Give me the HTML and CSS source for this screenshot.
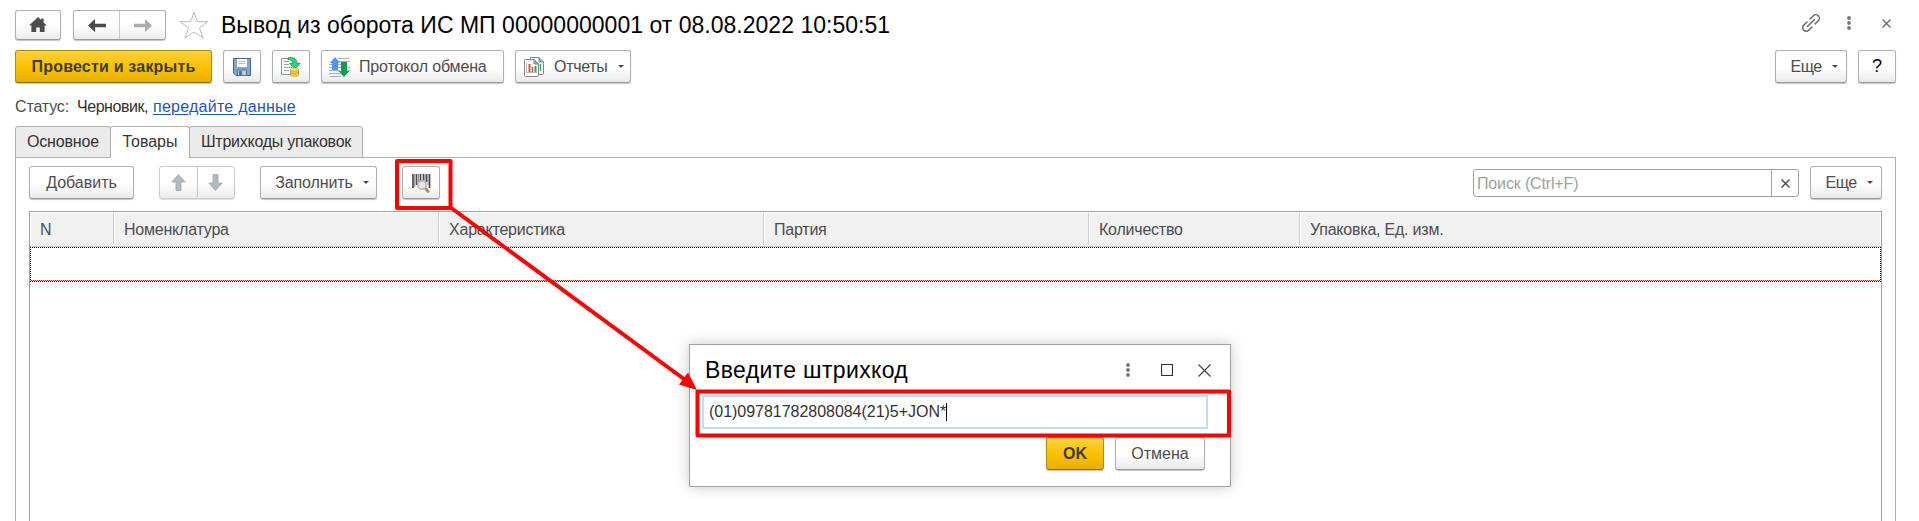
FILE: index.html
```html
<!DOCTYPE html>
<html lang="ru">
<head>
<meta charset="utf-8">
<title>Вывод из оборота ИС МП</title>
<link rel="stylesheet" href="styles.css">
</head>
<body>
<div class="form">
  <header class="titlebar">
    <button class="btn home"><svg width="18" height="16" viewBox="0 0 18 16"><path d="M9 0 0 8.6h2.4V15h4.8v-4.6h3.6V15h4.8V8.6H18L14.6 5.4V1.6h-2.4v1.5z" fill="#4d4d4d"/></svg></button>
    <div class="pair nav">
      <button><svg width="18" height="13" viewBox="0 0 18 13"><path d="M7 0 0 6.5 7 13V8.2h11V4.8H7z" fill="#4a4a4a"/></svg></button>
      <button><svg width="18" height="13" viewBox="0 0 18 13"><path d="m11 0 7 6.5-7 6.5V8.2H0V4.8h11z" fill="#acacac"/></svg></button>
    </div>
    <svg class="star" width="30" height="28" viewBox="0 0 30 28"><path d="m15 1.2 3.3 9.4 10.5.1-8.3 6.3 3.6 10.2L15 21l-9.100 6.200L9.500 17 1.200 10.700l10.500-.1z" fill="#fff" stroke="#b4bac0" stroke-width="1"/></svg>
    <h1 class="title">Вывод из оборота ИС МП 00000000001 от 08.08.2022 10:50:51</h1>
    <div class="wintools">
      <svg width="20" height="20" viewBox="0 0 20 20" fill="none" stroke="#6b6b6b" stroke-width="1.500" stroke-linecap="round"><path d="m6.500 13.500 7-7"/><path d="m9 6 3.300-3.300a3.500 3.500 0 0 1 5 5L14 11"/><path d="m11 14-3.300 3.300a3.500 3.500 0 0 1-5-5L6 9"/></svg>
      <svg width="4" height="14" viewBox="0 0 4 14" fill="#757575"><circle cx="2" cy="2" r="1.900"/><circle cx="2" cy="7" r="1.900"/><circle cx="2" cy="12" r="1.900"/></svg>
      <svg width="9" height="9" viewBox="0 0 9 9" stroke="#666" stroke-width="1.300"><path d="m.5.5 8 8m0-8-8 8"/></svg>
    </div>
  </header>

  <div class="commands">
    <button class="btn primary post">Провести и закрыть</button>
    <button class="btn icon"><svg width="18" height="18" viewBox="0 0 18 18"><path d="M.5.5h17v17H3L.5 15z" fill="#7fa6d4" stroke="#4b6685"/><path d="M4 1h10v8H4z" fill="#fff"/><path d="M5.500 3.500h7m-7 2h7" stroke="#b7bcc2"/><path d="M4.500 12h9v5.500h-9z" fill="#c9cdd1" stroke="#5f7186"/><path d="M6 13h3v4H6z" fill="#5c6f86"/></svg></button>
    <button class="btn icon"><svg width="20" height="20" viewBox="0 0 20 20"><path d="M.5 1.500h13v16H.5z" fill="#fafbfc" stroke="#8b9aa8"/><path d="M3 4.500h5m-5 3h5m-5 3h8m-8 3h5" stroke="#94a1ae"/><path d="M7 .8c6-1 9 1 9 5.700h3.200L14 12 8.800 6.500H12C12 3.500 10 2.500 7 2.800z" fill="#25d884" stroke="#159b5c" stroke-width=".8"/><path d="M9.500 12.500v5.300c0 2 8 2 8 0v-5.300z" fill="#f7cf46" stroke="#c99720" stroke-width=".8"/><path d="M9.500 15c0 2 8 2 8 0" fill="none" stroke="#c99720" stroke-width=".8"/><ellipse cx="13.500" cy="12.500" rx="4" ry="1.500" fill="#ffeb8f" stroke="#c99720" stroke-width=".8"/></svg></button>
    <button class="btn protocol"><svg width="21" height="20" viewBox="0 0 21 20"><path d="M9 1.500h11m-10 3h11M0 7.500h3m6 0h3M0 10.500h3m6 0h3m7 0h2M0 13.500h11m8 0h2M0 16.500h11M1 19.500h11" stroke="#a9b1b8"/><path d="M6 0 .8 6H3v7h6V6h2.200z" fill="#4f95f5"/><path d="M15 20 9.500 14H12V5h6v9h2.500z" fill="#0c9c50"/></svg><span>Протокол обмена</span></button>
    <button class="btn reports"><svg width="21" height="20" viewBox="0 0 21 20"><path d="M6.500.5h8.500l4.500 4.500v11.500a1 1 0 0 1-1 1h-11a1 1 0 0 1-1-1z" fill="#fff" stroke="#78899b"/><path d="M15 .5V5h4.500" fill="#9aa8b6" stroke="#78899b"/><path d="M16.500 7v7" stroke="#3faa45" stroke-width="1.500"/><path d="M1.500 2.500H10l4.500 4.500v11.500a1 1 0 0 1-1 1h-12a1 1 0 0 1-1-1v-15a1 1 0 0 1 1-1z" fill="#fff" stroke="#78899b"/><path d="M10 2.500V7h4.500z" fill="#9aa8b6" stroke="#78899b"/><path d="M2.500 6v9.500H13" fill="none" stroke="#c6b4b4"/><path d="M5.500 7v8" stroke="#e14a3c" stroke-width="2"/><path d="M8.500 10v5" stroke="#8a5f4e" stroke-width="1.500"/><path d="M11.500 9v6" stroke="#35a53e" stroke-width="2"/></svg><span>Отчеты</span><i class="caret"></i></button>
    <button class="btn more">Еще<i class="caret"></i></button>
    <button class="btn help">?</button>
  </div>

  <div class="status"><span class="label">Статус:</span><span class="state">Черновик,</span><a href="#">передайте данные</a></div>

  <nav class="tabs">
    <span class="tab t1">Основное</span><span class="tab active t2">Товары</span><span class="tab t3">Штрихкоды упаковок</span>
  </nav>

  <section class="panel">
    <div class="toolbar">
      <button class="btn add">Добавить</button>
      <div class="pair move">
        <button><svg width="15" height="17" viewBox="0 0 15 17"><path d="M7.500.5.8 8H5v8.500h5V8h4.200z" fill="#afbbc2" stroke="#99a7af" stroke-width=".8"/></svg></button>
        <button><svg width="15" height="17" viewBox="0 0 15 17"><path d="M7.500 16.500.8 9H5V.5h5V9h4.200z" fill="#afbbc2" stroke="#99a7af" stroke-width=".8"/></svg></button>
      </div>
      <button class="btn fill">Заполнить<i class="caret"></i></button>
      <button class="btn icon scan"><svg width="19" height="20" viewBox="0 0 19 20"><path d="M1 1v14M4.500 1v11M8.500 1v7M11.500 1v6M14.500 1v8M17.500 1v14" stroke="#4a4a4a" stroke-width="1.700"/><path d="M2.700 1v13M6.500 1v9M13 1v7M16 1v11" stroke="#8f8f8f"/><path d="m13 15 3.200 3.500" stroke="#b88a62" stroke-width="2.600" stroke-linecap="round"/><circle cx="10" cy="12" r="4.200" fill="#d9e8fa" stroke="#c3a797" stroke-width="1.400"/></svg></button>
      <div class="search"><span>Поиск (Ctrl+F)</span><b><svg width="9" height="9" viewBox="0 0 9 9" stroke="#444" stroke-width="1.300"><path d="m.5.5 8 8m0-8-8 8"/></svg></b></div>
      <button class="btn more">Еще<i class="caret"></i></button>
    </div>
    <div class="table">
      <div class="head">
        <span>N</span><span>Номенклатура</span><span>Характеристика</span><span>Партия</span><span>Количество</span><span>Упаковка, Ед. изм.</span>
      </div>
      <div class="row"></div>
    </div>
  </section>

  <div class="dialog">
    <div class="dhead">
      <h2>Введите штрихкод</h2>
      <svg class="dots" width="4" height="14" viewBox="0 0 4 14" fill="#757575"><circle cx="2" cy="2" r="1.900"/><circle cx="2" cy="7" r="1.900"/><circle cx="2" cy="12" r="1.900"/></svg>
      <svg class="max" width="12" height="12" viewBox="0 0 12 12"><path d="M.5.5h11v11H.5z" fill="none" stroke="#333" stroke-width="1.200"/></svg>
      <svg width="13" height="13" viewBox="0 0 13 13" stroke="#444" stroke-width="1.200"><path d="m.5.5 12 12m0-12-12 12"/></svg>
    </div>
    <div class="field"><span>(01)09781782808084(21)5+JON*</span><i></i></div>
    <div class="dfoot"><button class="btn primary ok">OK</button><button class="btn cancel">Отмена</button></div>
  </div>

  <svg class="marks" width="1919" height="521" viewBox="0 0 1919 521" fill="none" stroke="#f00" stroke-width="4" stroke-linejoin="round">
    <path d="M397 161h53.500v47H397zM697.500 391.500H1229v44H697.500z"/>
    <path d="m450 207 238 175"/>
    <path d="m697 390-18-5.500 9-12z" fill="#f00" stroke="none"/>
  </svg>
</div>
</body>
</html>
```
FILE: styles.css
```css
* { box-sizing: border-box; }
body { margin: 0; background: #fff; font-family: "Liberation Sans", Arial, sans-serif; font-size: 16px; color: #4d4d4d; }
.form { position: relative; width: 1919px; height: 521px; overflow: hidden; display: flex; flex-direction: column; }
button { font: inherit; color: inherit; padding: 0; margin: 0; border: 0; background: none; display: flex; align-items: center; justify-content: center; }
svg { display: block; flex: none; }
h1, h2 { margin: 0; font-weight: 400; color: #000; white-space: nowrap; }

.btn, .pair { height: 33px; flex: none; border: 1px solid #b0b0b0; border-bottom-color: #999; border-radius: 3px; background: linear-gradient(#fff 50%, #ebebeb); box-shadow: 0 1px 1px #c4c4c4; white-space: nowrap; }
.primary { border-color: #b08c10; border-bottom-color: #8f7000; background: linear-gradient(#ffd13e, #fbc200 50%, #e8b000); font-weight: 700; color: #3c3c3c; }
.pair { display: flex; }
.pair button { flex: 1; }
.pair button + button { border-left: 1px solid #c8c8c8; }
.caret { border: solid transparent; border-width: 3px 3px 0; border-top-color: #4d4d4d; margin-left: 10px; }

.titlebar { display: flex; align-items: center; height: 31px; margin: 10px 0 0 15px; }
.titlebar .btn, .titlebar .pair { height: 30px; align-self: flex-start; }
.home { width: 46px; }
.nav { width: 93px; margin-left: 12px; }
.star { margin: -1px 0 0 13px; }
.title { font-size: 23px; line-height: 28px; margin: -1px 0 0 12px; letter-spacing: .02px; }
.wintools { margin: -4px 28px 0 auto; display: flex; align-items: center; gap: 26px; }
.wintools svg + svg + svg { margin-left: 5px; }

.commands { display: flex; gap: 11px; margin: 10px 23px 0 15px; }
.post { width: 197px; letter-spacing: .2px; }
.icon, .help { width: 38px; }
.help { color: #000; font-size: 18px; }
.protocol { width: 183px; gap: 9px; justify-content: flex-start; padding-left: 7px; letter-spacing: -.15px; }
.reports { width: 116px; justify-content: flex-start; padding-left: 8px; letter-spacing: -.3px; }
.reports span { margin-left: 9px; }
.more { width: 72px; padding-left: 6px; letter-spacing: -.5px; }
.commands .more { margin-left: auto; }

.status { display: flex; height: 20px; line-height: 20px; margin: 13px 0 0 15px; padding-top: 1px; white-space: nowrap; }
.label { letter-spacing: -.15px; }
.state { margin-left: 8px; color: #333; letter-spacing: -.45px; }
.status a { margin-left: 5px; color: #1f56b5; text-underline-offset: 2px; letter-spacing: .25px; }

.tabs { display: flex; height: 32px; margin: 10px 0 -1px 15px; position: relative; z-index: 1; color: #333; }
.tab { height: 32px; border: 1px solid #b0b0b0; background: #ebebeb; border-radius: 3px 3px 0 0; line-height: 30px; text-align: center; margin-right: -1px; white-space: nowrap; }
.tab.active { background: #fff; border-bottom-color: #fff; }
.t1 { width: 96px; letter-spacing: -.15px; }
.t2 { width: 80px; }
.t3 { width: 174px; letter-spacing: -.25px; }

.panel { width: 1881px; height: 370px; margin-left: 15px; border: 1px solid #b0b0b0; padding: 8px 13px 0; flex: none; }
.toolbar { display: flex; height: 33px; }
.add { width: 105px; }
.move { width: 76px; margin-left: 25px; border-color: #ccc; box-shadow: 0 1px 1px #ddd; }
.fill { width: 117px; margin-left: 25px; padding-left: 7px; letter-spacing: -.1px; }
.scan { margin-left: 25px; }
.search { width: 326px; height: 28px; margin: 3px 11px 0 auto; border: 1px solid #a0a0a0; border-radius: 3px; display: flex; line-height: 27px; color: #a0a0a0; }
.search span { flex: 1; padding-left: 3px; letter-spacing: -.15px; }
.search b { width: 27px; border-left: 1px solid #a0a0a0; display: flex; align-items: center; justify-content: center; }

.table { margin-top: 12px; height: 330px; width: 1853px; border: 1px solid #a0a0a0; }
.head { display: grid; grid-template-columns: 82px 325px 325px 325px 211px 1fr; height: 35px; padding: 1px; background: #fff; border-bottom: 1px solid #c8c8c8; letter-spacing: -.22px; }
.head span { background: #f1f1f1; padding-left: 10px; line-height: 33px; height: 32px; }
.head span:first-child { padding-left: 9px; }
.head span + span { border-left: 1px solid #ccc; box-shadow: inset 1px 0 #fff; }
.row { height: 35px; border: 1px dotted #000; background: repeating-linear-gradient(90deg, #e00 0 1px, #fbb 1px 2px) bottom / 100% 1px no-repeat padding-box; }

.dialog { position: absolute; left: 689px; top: 344px; width: 542px; height: 143px; background: #fff; border: 1px solid #a0a0a0; box-shadow: 0 0 14px rgba(0,0,0,.22); }
.dhead { display: flex; align-items: center; height: 50px; padding: 0 19px 0 15px; }
h2 { font-size: 23px; flex: 1; letter-spacing: .35px; }
.dots { margin-right: 31px; }
.max { margin-right: 25px; }
.field { width: 506px; height: 34px; margin-left: 12px; border: 2px solid #bcdff8; display: flex; align-items: center; padding-left: 5px; color: #333; letter-spacing: -.03px; }
.field i { width: 1px; height: 18px; background: #000; }
.dfoot { display: flex; justify-content: flex-end; gap: 11px; padding: 8px 25px 0 0; }
.ok { width: 58px; }
.cancel { width: 90px; }
.marks { position: absolute; left: 0; top: 0; }
```
